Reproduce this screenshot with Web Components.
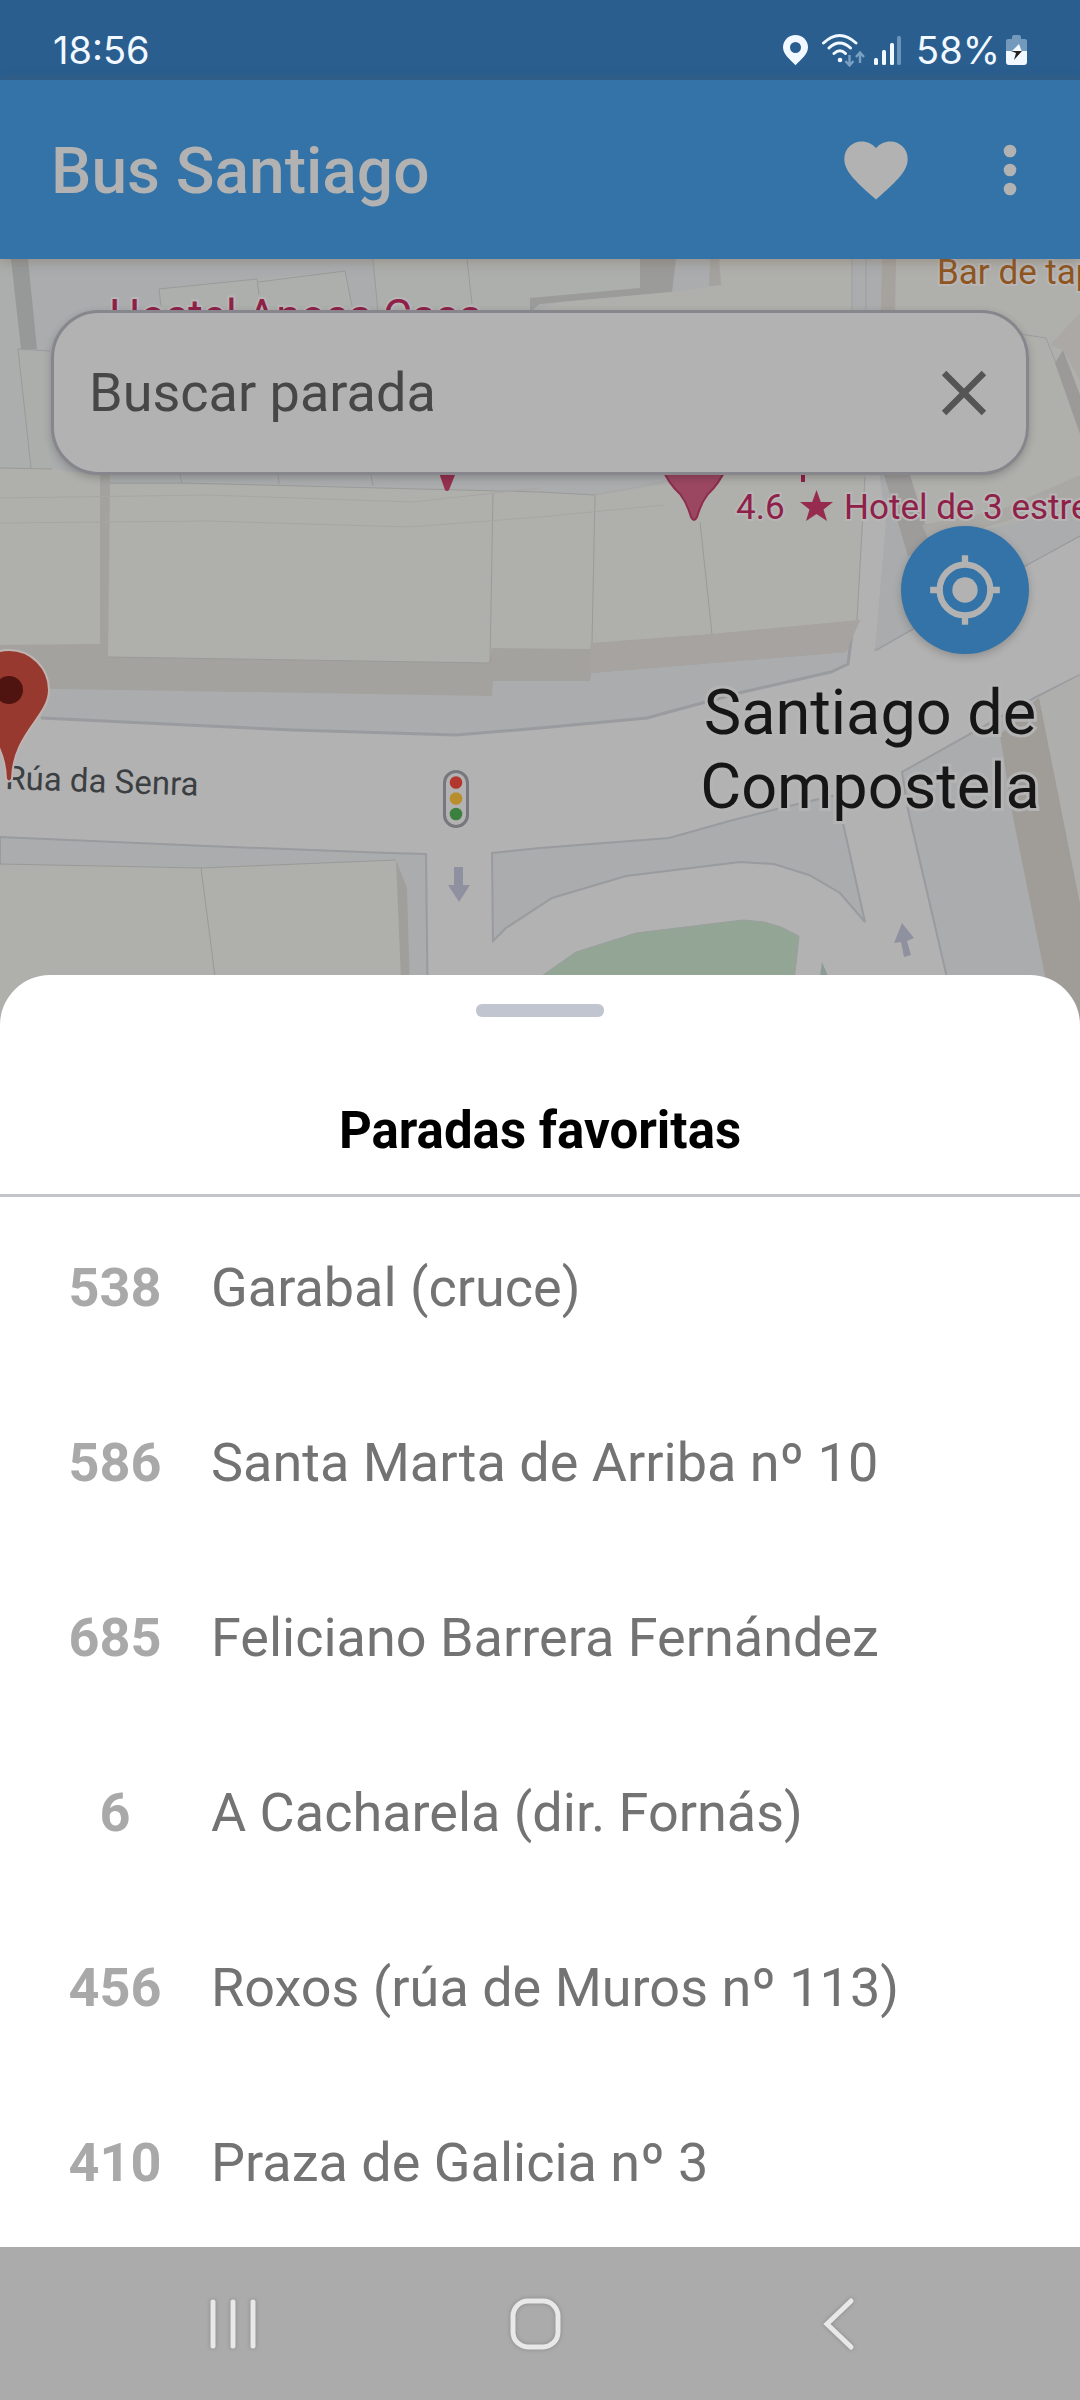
<!DOCTYPE html>
<html lang="gl">
<head>
<meta charset="utf-8">
<meta name="viewport" content="width=device-width, initial-scale=1">
<title>Bus Santiago</title>
<style>
  body {
    margin: 0;
    font-family: Roboto, "Noto Sans", sans-serif;
  }
</style>
</head>
<body>
<bus-app>
  <status-bar slot="status" time="18:56" battery="58%"></status-bar>
  <app-bar slot="bar">Bus Santiago</app-bar>
  <map-view slot="map">
    <search-box placeholder="Buscar parada"></search-box>
    <locate-button></locate-button>
  </map-view>
  <bottom-sheet slot="sheet" heading="Paradas favoritas">
    <favorite-stop number="538">Garabal (cruce)</favorite-stop>
    <favorite-stop number="586">Santa Marta de Arriba nº 10</favorite-stop>
    <favorite-stop number="685">Feliciano Barrera Fernández</favorite-stop>
    <favorite-stop number="6">A Cacharela (dir. Fornás)</favorite-stop>
    <favorite-stop number="456">Roxos (rúa de Muros nº 113)</favorite-stop>
    <favorite-stop number="410">Praza de Galicia nº 3</favorite-stop>
  </bottom-sheet>
  <nav-bar slot="nav"></nav-bar>
</bus-app>

<script>
class BusApp extends HTMLElement {
  constructor() {
    super();
    this.attachShadow({ mode: 'open' });
    this.shadowRoot.innerHTML = `
      <style>
        :host {
          display: flex;
          flex-direction: column;
          height: 100vh;
          background: #ababab;
        }
        main {
          flex: 1;
          min-height: 0;
          display: flex;
          flex-direction: column;
          overflow: hidden;
        }
      </style>
      <slot name="status"></slot>
      <slot name="bar"></slot>
      <main>
        <slot name="map"></slot>
        <slot name="sheet"></slot>
      </main>
      <slot name="nav"></slot>
    `;
  }
}

class StatusBar extends HTMLElement {
  constructor() {
    super();
    this.attachShadow({ mode: 'open' });
  }

  connectedCallback() {
    this.shadowRoot.innerHTML = `
      <style>
        :host {
          display: flex;
          justify-content: space-between;
          align-items: center;
          box-sizing: border-box;
          height: 80px;
          padding: 20px 53px 0;
          background: #295e8f;
          color: #f2f8ff;
          font-family: Inter, Roboto, sans-serif;
          font-size: 38px;
          line-height: 48px;
        }
        .icons {
          display: flex;
          align-items: center;
        }
        svg {
          display: block;
        }
        .level {
          padding: 0 6px 0 14px;
        }
      </style>
      <time>${this.getAttribute('time')}</time>
      <div class="icons">
        <svg width="120" height="36" viewBox="781 31 120 36" fill="#f2f8ff" aria-hidden="true">
          <path fill-rule="evenodd" d="M794.500 34c-7 0-12.500 5.500-12.500 12.300 0 7 7 12 12.500 18 5.500-6 12.500-11 12.500-18 0-6.800-5.500-12.300-12.500-12.300zm0 7a5.500 5.500 0 1 1 0 11 5.500 5.500 0 0 1 0-11z"/>
          <g fill="none" stroke="#f2f8ff" stroke-width="3" stroke-linecap="round">
            <path d="M822.500 42q16-15 32.500 0M828 47q10.500-10 21.500 0M833 52.500q6-5.500 11.500 0"/>
          </g>
          <circle cx="839" cy="59" r="2.300"/>
          <path d="M848.500 54v10m-4-4 4 4.500 4-4.500M859 62V52m-4 4 4-4.500 4 4.500" fill="none" stroke="#7ba0c2" stroke-width="2.400"/>
          <rect x="873" y="57" width="4" height="7" rx="1.500"/>
          <rect x="881" y="49" width="4" height="15" rx="1.500"/>
          <rect x="889" y="42" width="4" height="22" rx="1.500"/>
          <rect x="896" y="35" width="4" height="29" rx="1.500" fill="#6b94ba"/>
        </svg>
        <span class="level">${this.getAttribute('battery')}</span>
        <svg width="21" height="30" viewBox="0 0 21 30" aria-hidden="true">
          <path d="M6 2q0-2 2-2h5q2 0 2 2v2h4q2 0 2 2v10H0V6q0-2 2-2h4z" fill="#7399bd"/>
          <path d="M0 16h21v11q0 3-3 3H3q-3 0-3-3z" fill="#f2f8ff"/>
          <path d="M13 9 5 17h11z" fill="#f2f8ff"/>
          <path d="M5 16h11l-8 9 2-7z" fill="#222"/>
        </svg>
      </div>
    `;
  }
}

class AppBar extends HTMLElement {
  constructor() {
    super();
    this.attachShadow({ mode: 'open' });
    this.shadowRoot.innerHTML = `
      <style>
        :host {
          display: flex;
          align-items: center;
          box-sizing: border-box;
          height: 179px;
          padding: 0 32px 0 51px;
          background: #3373a7;
          color: #b2b2b2;
          position: relative;
          z-index: 1;
          box-shadow: 0 2px 12px rgba(110, 90, 70, 0.4);
        }
        h1 {
          flex: 1;
          margin: 0;
          padding-top: 4px;
          font-size: 64px;
          line-height: 76px;
          font-weight: 500;
        }
        .actions {
          display: flex;
          gap: 58px;
        }
        button {
          display: block;
          padding: 0;
          border: 0;
          background: none;
          color: inherit;
        }
        svg {
          display: block;
          width: 76px;
          height: 76px;
          fill: currentColor;
        }
      </style>
      <h1><slot></slot></h1>
      <div class="actions">
        <button aria-label="Favoritas">
          <svg viewBox="0 0 24 24"><path d="M12 21.350l-1.450-1.320C5.400 15.360 2 12.280 2 8.500 2 5.420 4.420 3 7.500 3c1.740 0 3.410.81 4.500 2.090C13.090 3.810 14.760 3 16.500 3 19.580 3 22 5.420 22 8.500c0 3.780-3.400 6.860-8.550 11.540L12 21.350z"/></svg>
        </button>
        <button aria-label="Máis opcións">
          <svg viewBox="0 0 24 24"><circle cx="12" cy="6" r="2"/><circle cx="12" cy="12" r="2"/><circle cx="12" cy="18" r="2"/></svg>
        </button>
      </div>
    `;
  }
}

class MapView extends HTMLElement {
  constructor() {
    super();
    this.attachShadow({ mode: 'open' });
    this.shadowRoot.innerHTML = `
      <style>
        :host {
          display: flex;
          flex-direction: column;
          gap: 51px;
          box-sizing: border-box;
          flex: none;
          height: 766px;
          padding: 51px;
          position: relative;
          overflow: hidden;
          background: #b2b2b2;
        }
        .map {
          position: absolute;
          top: 0;
          left: 0;
          width: 100%;
          height: 100%;
        }
        .poi {
          font-size: 35px;
          fill: #8f2148;
          stroke: #b8b6b6;
          stroke-width: 4px;
          paint-order: stroke;
        }
        .poi.large {
          font-size: 44px;
        }
        .poi.food {
          fill: #8f5520;
        }
        .city {
          font-size: 63px;
          fill: #161616;
          stroke: #b4b4b4;
          stroke-width: 6px;
          paint-order: stroke;
          text-anchor: middle;
        }
        .street {
          font-size: 33px;
          fill: #3c3f42;
        }
      </style>
      <svg class="map" viewBox="0 259 1080 766" preserveAspectRatio="xMidYMin slice">
        <rect y="259" width="1080" height="766" fill="#b2b2b2"/>

        <!-- pavement and plots north of the street -->
        <path d="M0 259H1080V535L1029 563 910 630 875 650 886 525 880 475 865 475 857 617 848 664 831 672 743 692 702 703 647 718 540 728 456 735 293 730 0 717z" fill="#aaacae"/>
        <path d="M41 718 293 730 456 735 540 728 647 718 702 703 743 692 831 672 848 664 852 633M875 650 910 630 1029 563 1080 535" fill="none" stroke="#9a9b9f" stroke-width="3"/>
        <path d="M0 259H11L21 349 30 468H0z" fill="#abaeac"/>
        <path d="M11 259H28L37 349H21z" fill="#979999"/>
        <path d="M18 349 50 351V469H31z" fill="#acaeac"/>
        <path d="M159 289 257 279 345 271 352 312H162zM373 259H640V288L540 298 530 312H378z" fill="#adafad"/>
        <path d="M159 289 257 279 259 295M258 282 345 271 352 306M373 259 378 312M467 259 472 304M18 349 50 351M18 349 31 468M159 289 161 306" fill="none" stroke="#999b9b" stroke-width="1"/>
        <path d="M530 298 640 288V259H676L672 292 540 304 530 312z" fill="#9b9b9a"/>
        <path d="M672 292 721 285 719 259H852V312H530L560 302z" fill="#afafac"/>
        <path d="M710 259H719L721 285 709 286z" fill="#a4a29f"/>
        <path d="M896 259H1080V535L1029 563 931 543 884 475 895 310z" fill="#afafac"/>
        <path d="M882 259H896L895 312H881z" fill="#a6a39f"/>
        <path d="M852 259V312M866 259V312M1020 334 1046 338 1058 368" fill="none" stroke="#9c9d9e" stroke-width="1"/>
        <path d="M1050 345 1080 313V380L1063 350z" fill="#aca8a5"/>
        <path d="M1055 363 1063 350 1080 395V434z" fill="#9b9a98"/>
        <path d="M884 475H910L931 543 908 557z" fill="#9e9c9b"/>
        <path d="M1000 510 1080 475V500L930 543 922 525z" fill="#aaa8a5"/>
        <path d="M880 475H884L908 557 910 630 875 650 886 525z" fill="#a9abad"/>
        <path d="M931 543 1080 507V535L1029 563 910 630 908 557z" fill="#aaacae"/>

        <!-- terrace of buildings, walls first and roofs above -->
        <path d="M0 640H98V475H110V650H490V640H590L860 620 846 652 591 673 590 681H493L492 696 310 693 0 688z" fill="#a3a29e"/>
        <path d="M591 643 712 634 860 620 846 652 591 673z" fill="#a6a3a0"/>
        <path d="M0 468 52 469 100 475V644L0 645z" fill="#afafac"/>
        <path d="M110 483H182L540 492 595 495 740 473H865L857 617 860 620 712 634 591 643 590 649 492 648 489 663 108 657z" fill="#afafac"/>
        <path d="M0 468 52 469M110 483H182L540 492 595 495M493 493 490 663M595 495 592 643M700 522 712 634M865 477 857 620M108 657 489 663M180 475 182 483M278 475 279 484M371 475 373 486" fill="none" stroke="#9a9b99" stroke-width="1"/>
        <path d="M0 498 207 495 413 502 540 488M0 523 207 521 410 527 540 517 664 505M595 495 700 475" fill="none" stroke="#a7a6a2" stroke-width="1"/>

        <!-- south side -->
        <path d="M0 837 207 846 389 853 426 854 428 1025H0z" fill="#aaacae" stroke="#999b9f" stroke-width="2"/>
        <path d="M0 864 201 868 396 860 403 1025H0z" fill="#afafac"/>
        <path d="M396 860 407 888 411 1025H403z" fill="#a19f9b"/>
        <path d="M0 864 201 868 396 860M201 868 218 1000" fill="none" stroke="#999a98" stroke-width="1"/>
        <path d="M492 853 540 848 669 838 733 820 781 808 840 794 843 823 865 922 840 893 809 875 774 864 740 862 626 876 552 898 506 928 493 941z" fill="#aaacae" stroke="#999b9f" stroke-width="2"/>
        <path d="M520 989 543 975 576 952 636 933 743 920 764 922 781 927 799 936 792 1000H500z" fill="#93a595" stroke="#9a9f9f"/>
        <path d="M822 962 834 990H818z" fill="#8b9c94"/>
        <path d="M902 772 1036 697 1080 903V1025H958L908 810z" fill="#aaacae"/>
        <path d="M958 1025 908 810 902 772 1036 697 1080 675" fill="none" stroke="#999b9f" stroke-width="2"/>
        <path d="M1000 735 1039 697 1080 903V1025H1055L1013 817z" fill="#a09d99"/>
        <path d="M1039 697 1080 675V903z" fill="#aeaeac"/>

        <path d="M454 867H463V885H470L459 902 448 885H454z" fill="#9091a0"/>
        <path d="M902 923 914 938 907 941 911 955 904 957 901 942 894 943z" fill="#9091a0"/>

        <rect x="444.500" y="771.500" width="23" height="55" rx="11.500" fill="#b2b2b2" stroke="#77787d" stroke-width="3"/>
        <circle cx="456" cy="782.500" r="6.300" fill="#b3372f"/>
        <circle cx="456" cy="798.500" r="6.300" fill="#b88d2c"/>
        <circle cx="456" cy="814" r="6.300" fill="#3c8040"/>

        <text class="poi large" x="109" y="331">Hostel Anosa Casa</text>
        <text class="poi food" x="937" y="284">Bar de tapas</text>
        <text class="poi" x="736" y="519">4.6</text>
        <path d="M816.500 490 820.800 502H833L823.500 509.500 827 521 816.500 514 806 521 809.500 509.500 800 502H812.200z" fill="#952c50"/>
        <text class="poi" x="844" y="519">Hotel de 3 estrelas</text>
        <rect x="801" y="470" width="4" height="12" fill="#8f2148"/>
        <path d="M438 470H457L449 490Q447 492 445 490z" fill="#95304f"/>
        <path d="M662 468H726Q719 484 708 494 701 503 697 517 694 523 691 517 687 503 680 494 669 484 662 468z" fill="#9c4762" stroke="#8c2d4d" stroke-width="2"/>

        <text class="city" x="870" y="734">Santiago de</text>
        <text class="city" x="870" y="808">Compostela</text>
        <text class="street" x="5" y="789" transform="rotate(2 5 789)">Rúa da Senra</text>

        <path d="M9 650a40 40 0 0 1 40 40C49 717 13 733 12 779Q9 784 6 779C5 733-31 717-31 690a40 40 0 0 1 40-40z" fill="#98392f" stroke="#bfb4b1" stroke-width="2"/>
        <circle cx="9" cy="690" r="14" fill="#4f1410"/>
      </svg>
      <slot></slot>
    `;
  }
}

class SearchBox extends HTMLElement {
  constructor() {
    super();
    this.attachShadow({ mode: 'open' });
  }

  connectedCallback() {
    const placeholder = this.getAttribute('placeholder') || '';
    this.shadowRoot.innerHTML = `
      <style>
        :host {
          display: block;
          position: relative;
        }
        form {
          display: flex;
          align-items: center;
          box-sizing: border-box;
          height: 165px;
          padding: 0 24px 0 35px;
          border: 3px solid #86868c;
          border-radius: 48px;
          background: #b2b2b2;
          box-shadow: 0 3px 8px rgba(0, 0, 0, 0.2);
        }
        input {
          flex: 1;
          min-width: 0;
          padding: 0;
          border: 0;
          outline: 0;
          background: none;
          font: 54px/64px Roboto, "Noto Sans", sans-serif;
          color: #444;
        }
        input::placeholder {
          color: #474747;
          opacity: 1;
        }
        button {
          padding: 0;
          border: 0;
          background: none;
        }
        svg {
          display: block;
          width: 76px;
          height: 76px;
          fill: #555;
        }
      </style>
      <form>
        <input type="text" placeholder="${placeholder}" aria-label="${placeholder}">
        <button type="reset" aria-label="Borrar">
          <svg viewBox="0 0 24 24"><path d="M19 6.410 17.590 5 12 10.590 6.410 5 5 6.410 10.590 12 5 17.590 6.410 19 12 13.410 17.590 19 19 17.590 13.410 12z"/></svg>
        </button>
      </form>
    `;
  }
}

class LocateButton extends HTMLElement {
  constructor() {
    super();
    this.attachShadow({ mode: 'open' });
    this.shadowRoot.innerHTML = `
      <style>
        :host {
          display: block;
          align-self: flex-end;
          position: relative;
        }
        button {
          display: flex;
          align-items: center;
          justify-content: center;
          width: 128px;
          height: 128px;
          padding: 0;
          border: 0;
          border-radius: 50%;
          background: #3373a7;
          box-shadow: 0 3px 8px rgba(0, 0, 0, 0.2);
        }
        svg {
          width: 76px;
          height: 76px;
        }
      </style>
      <button aria-label="A miña localización">
        <svg viewBox="0 0 24 24">
          <circle cx="12" cy="12" r="8" fill="none" stroke="#b2b2b2" stroke-width="2"/>
          <circle cx="12" cy="12" r="4" fill="#b2b2b2"/>
          <path d="M12 1v3M12 20v3M1 12h3M20 12h3" stroke="#b2b2b2" stroke-width="2"/>
        </svg>
      </button>
    `;
  }
}

class BottomSheet extends HTMLElement {
  constructor() {
    super();
    this.attachShadow({ mode: 'open' });
  }

  connectedCallback() {
    this.shadowRoot.innerHTML = `
      <style>
        :host {
          display: block;
          flex: 1;
          min-height: 0;
          margin-top: -50px;
          position: relative;
          overflow: hidden;
          border-radius: 50px 50px 0 0;
          background: #fff;
        }
        .handle {
          width: 128px;
          height: 13px;
          margin: 29px auto 0;
          border-radius: 6px;
          background: #c1c5cf;
        }
        h2 {
          margin: 0;
          padding: 84px 0 33px;
          border-bottom: 3px solid #c3c5ca;
          font-size: 51px;
          line-height: 60px;
          font-weight: 700;
          text-align: center;
          color: #000;
        }
        .list {
          padding-top: 3px;
        }
      </style>
      <div class="handle"></div>
      <h2>${this.getAttribute('heading')}</h2>
      <div class="list"><slot></slot></div>
    `;
  }
}

class FavoriteStop extends HTMLElement {
  constructor() {
    super();
    this.attachShadow({ mode: 'open' });
  }

  connectedCallback() {
    this.shadowRoot.innerHTML = `
      <style>
        :host {
          display: block;
        }
        button {
          display: flex;
          align-items: center;
          width: 100%;
          height: 175px;
          padding: 0 48px;
          border: 0;
          background: none;
          font: 54px/64px Roboto, "Noto Sans", sans-serif;
          color: #737373;
          text-align: left;
        }
        b {
          width: 134px;
          margin-right: 29px;
          text-align: center;
          color: #a9a9a9;
        }
      </style>
      <button><b>${this.getAttribute('number')}</b><slot></slot></button>
    `;
  }
}

class NavBar extends HTMLElement {
  constructor() {
    super();
    this.attachShadow({ mode: 'open' });
    this.shadowRoot.innerHTML = `
      <style>
        :host {
          display: block;
          flex: none;
        }
        nav {
          display: flex;
          justify-content: space-between;
          align-items: center;
          height: 153px;
          padding: 0 208px 0 200px;
          background: #ababab;
        }
        button {
          padding: 0;
          border: 0;
          background: none;
        }
        svg {
          display: block;
          width: 66px;
          height: 66px;
          fill: none;
          stroke: #e8e8e8;
          stroke-width: 5;
          stroke-linecap: round;
          filter: drop-shadow(0 0 2px rgba(0, 0, 0, 0.2));
        }
      </style>
      <nav>
        <button aria-label="Recentes"><svg viewBox="0 0 66 66"><path d="M13 11v44M33 11v44M53 11v44"/></svg></button>
        <button aria-label="Inicio"><svg viewBox="0 0 66 66"><rect x="10" y="10" width="45" height="46" rx="15"/></svg></button>
        <button aria-label="Atrás"><svg viewBox="0 0 66 66"><path d="M45 10 21 33 45 56"/></svg></button>
      </nav>
    `;
  }
}

customElements.define('bus-app', BusApp);
customElements.define('status-bar', StatusBar);
customElements.define('app-bar', AppBar);
customElements.define('map-view', MapView);
customElements.define('search-box', SearchBox);
customElements.define('locate-button', LocateButton);
customElements.define('bottom-sheet', BottomSheet);
customElements.define('favorite-stop', FavoriteStop);
customElements.define('nav-bar', NavBar);
</script>
</body>
</html>
